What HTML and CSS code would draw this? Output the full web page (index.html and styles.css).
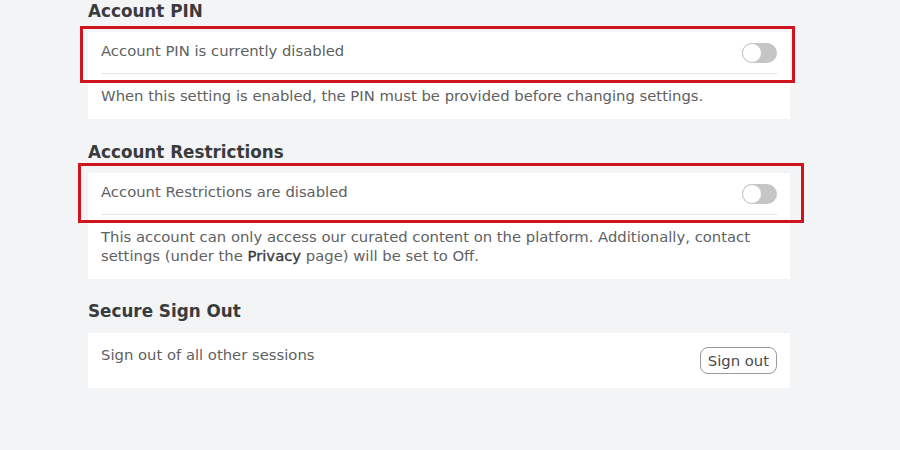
FILE: index.html
```html
<!DOCTYPE html>
<html lang="en">
<head>
    <meta charset="UTF-8">
    <title>Security settings</title>
    <link rel="stylesheet" href="styles.css">
</head>
<body>
    <div class="container">
        <div class="section">
            <h2 class="section-title">Account PIN</h2>
            <div class="card">
                <div class="highlight highlight-pin"></div>
                <div class="setting-row">
                    <span class="setting-label">Account PIN is currently disabled</span>
                    <span class="toggle"><span class="knob"></span></span>
                </div>
                <p class="setting-desc">When this setting is enabled, the PIN must be provided before changing settings.</p>
            </div>
        </div>

        <div class="section">
            <h2 class="section-title">Account Restrictions</h2>
            <div class="card">
                <div class="highlight highlight-restrict"></div>
                <div class="setting-row">
                    <span class="setting-label">Account Restrictions are disabled</span>
                    <span class="toggle"><span class="knob"></span></span>
                </div>
                <p class="setting-desc">This account can only access our curated content on the platform. Additionally, contact settings (under the <span class="link-text">Privacy</span> page) will be set to Off.</p>
            </div>
        </div>

        <div class="section section-last">
            <h2 class="section-title">Secure Sign Out</h2>
            <div class="card card-row">
                <span class="setting-label">Sign out of all other sessions</span>
                <button class="btn-outline">Sign out</button>
            </div>
        </div>
    </div>
</body>
</html>
```
FILE: styles.css
```css
body {
    margin: 0;
    background-color: #f2f4f5;
    font-family: "DejaVu Sans", sans-serif;
    color: #606162;
}

.container {
    width: 702px;
    margin-left: 88px;
}

.section {
    margin-bottom: 22px;
}

.section-title {
    margin: 0 0 10px;
    font-size: 16.8px;
    line-height: 22px;
    font-weight: bold;
    color: #393b3d;
}

.section-last .section-title {
    margin-top: -1px;
    margin-bottom: 11px;
}

.card {
    position: relative;
    background: white;
    padding: 0 13px;
}

.setting-row {
    display: flex;
    justify-content: space-between;
    align-items: flex-start;
    padding: 9px 0 10px;
    border-bottom: 1px solid #e3e4e5;
}

.setting-label {
    font-size: 14.8px;
    line-height: 20px;
}

.toggle {
    position: relative;
    width: 35px;
    height: 20px;
    margin-top: 2px;
    border-radius: 10px;
    background: #c4c5c6;
}

.knob {
    position: absolute;
    left: 0;
    top: 0;
    width: 18px;
    height: 18px;
    border-radius: 50%;
    background: white;
    border: 1px solid #c4c5c6;
}

.setting-desc {
    margin: 0;
    padding: 12px 0 14px;
    font-size: 14.8px;
    line-height: 19px;
}

.link-text {
    color: #393b3d;
    -webkit-text-stroke: 0.35px #393b3d;
}

.card-row {
    display: flex;
    justify-content: space-between;
    align-items: flex-start;
    padding: 12px 13px 14px;
}

.btn-outline {
    margin-top: 2px;
    height: 27px;
    padding: 0 7px;
    font-family: "DejaVu Sans", sans-serif;
    font-size: 14.8px;
    color: #4a4b4d;
    background: white;
    border: 1px solid #9a9b9c;
    border-radius: 8px;
}

/* red annotation frames */
.highlight {
    position: absolute;
    border: 3px solid #d0141e;
}

.highlight-pin {
    left: -8px;
    top: -6px;
    width: 709px;
    height: 51px;
}

.highlight-restrict {
    left: -10px;
    top: -10px;
    width: 720px;
    height: 54px;
}
```
